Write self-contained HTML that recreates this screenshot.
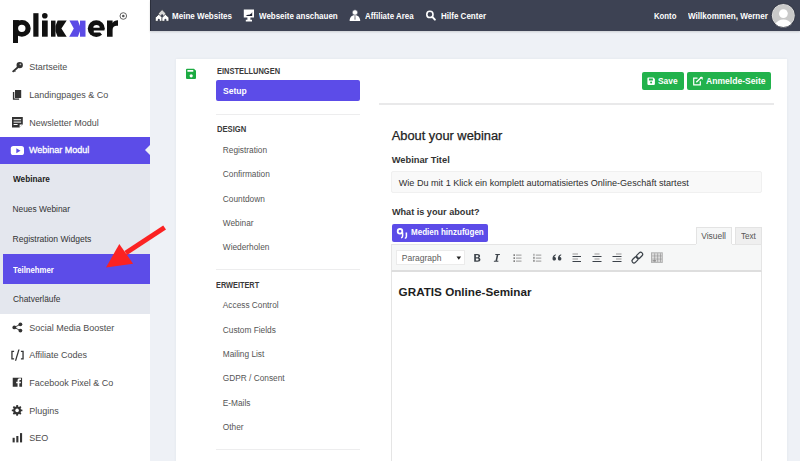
<!DOCTYPE html>
<html><head><meta charset="utf-8">
<style>
*{margin:0;padding:0;box-sizing:border-box}
html,body{width:800px;height:461px;overflow:hidden;background:#eef1f6;font-family:"Liberation Sans",sans-serif}
.a{position:absolute;white-space:nowrap;line-height:1}
.b{font-weight:bold}
#side{position:absolute;left:0;top:0;width:150px;height:461px;background:#fff}
#hdr{position:absolute;left:150px;top:0;width:650px;height:31px;background:#3d4253;box-shadow:0 1px 2px rgba(0,0,0,.15)}
.ht{color:#fff;font-size:9px;font-weight:bold;transform-origin:0 0}
.si{color:#4d4d4d;font-size:9px}
.sub{color:#333;font-size:8.4px}
.nav{color:#555;font-size:8.3px}
.cap{color:#3a3a3a;font-size:8.4px;font-weight:bold;transform-origin:0 0}
svg{position:absolute;overflow:visible}
</style></head><body>
<div id="side">
  <!-- logo -->
  <svg style="left:0;top:0" width="150" height="50" viewBox="0 0 150 50">
    <g fill="#111">
      <rect x="13" y="20.3" width="5" height="22.7"/>
      <path fill-rule="evenodd" d="M21.9 20a8.8 8.4 0 1 1 0 16.8a8.8 8.4 0 1 1 0-16.8zM21.8 24.7a3.7 3.6 0 1 0 0 7.2a3.7 3.6 0 1 0 0-7.2z"/>
      <rect x="13" y="20.2" width="6" height="5"/>
      <rect x="33.3" y="13.2" width="5.2" height="23.5"/>
      <rect x="42" y="20.5" width="5.7" height="16.2"/>
      <circle cx="44.8" cy="15.8" r="2.8"/>
      <rect x="51" y="20.6" width="4.5" height="16.1"/>
      <path d="M55.5 26L57.6 20.6H66.7L61.4 28.6L66.7 36.7H57.6L55.5 31.2z"/>
      <ellipse cx="96.3" cy="28.6" rx="8.5" ry="8.4"/>
      <path d="M107 20.6h5.6v2.4c1-1.8 2.8-2.8 5.4-2.8v5.6c-.5-.1-.9-.1-1.3-.1c-2.4 0-4.1 1.3-4.1 4.2v6.8h-5.6z"/>
    </g>
    <g fill="#fff">
      <path d="M93.3 27.7a3.2 2.7 0 0 1 6.4 0z"/>
      <path d="M93.8 30.6H106V35.5H102.5L100.2 32.5H93.8z"/>
    </g>
    <g fill="#5b4be6">
      <rect x="80" y="20.6" width="5.5" height="16.1"/>
      <path d="M69.4 20.6H77.9L80 26V31.2L77.9 36.7H69.2L73.8 28.6z"/>
    </g>
    <circle cx="123.3" cy="16" r="3.3" fill="none" stroke="#555" stroke-width=".9"/>
    <circle cx="123.3" cy="16" r="1.3" fill="#555"/>
  </svg>

  <!-- main items -->
  <svg style="left:0;top:0" width="30" height="461" viewBox="0 0 30 461">
    <g fill="#333" stroke="none">
      <!-- key -->
      <circle cx="19.7" cy="65.1" r="3.2"/>
      <path d="M17.3 66.4L12 71.2L13.2 72.5L14.3 71.6L14.9 72.1L15.7 71.4L15.3 70.8L18.7 67.8z"/>
      <!-- pages -->
      <rect x="15" y="90" width="6.2" height="8" />
      <path d="M12.9 92h1.4v6.4h4.8v1.3h-6.2z"/>
      <!-- newsletter -->
      <path d="M12 117h10.8v7.4l-3.2 3.2H12z"/>
    </g>
    <g fill="#fff">
      <rect x="13.6" y="119.2" width="7.5" height="1"/>
      <rect x="13.6" y="121.6" width="7.5" height="1"/>
      <rect x="13.6" y="124" width="4" height="1"/>
      <path d="M19.6 127.6v-3.2h3.2z"/>
    </g>
    <g fill="#333">
      <!-- share -->
      <circle cx="20.4" cy="324.3" r="1.9"/><circle cx="14.3" cy="327.4" r="1.9"/><circle cx="20.4" cy="330.6" r="1.9"/>
      <path d="M14.3 327.4L20.4 324.3M14.3 327.4L20.4 330.6" stroke="#333" stroke-width=".9"/>
      <!-- [/] -->
      <path d="M11.3 350.8h2.8v1.3h-1.5v6.2h1.5v1.3h-2.8z"/>
      <path d="M23.7 350.8h-2.8v1.3h1.5v6.2h-1.5v1.3h2.8z"/>
      <path d="M18.3 349.6h1.3l-3.4 11.2h-1.3z"/>
      <!-- fb -->
      <path transform="translate(17.4 382.3) scale(1.05) translate(-17.45 -382.3)" d="M13 378h8.9v8.6h-2.6v-3.4h1.3l.2-1.5h-1.5v-.9c0-.5.2-.8.8-.8h.8v-1.4c-.2 0-.6-.1-1.2-.1c-1.3 0-2.1.8-2.1 2.2v1h-1.3v1.5h1.3v3.4H13z"/>
      <!-- bars -->
      <rect x="12.6" y="437.8" width="2.1" height="4.6"/>
      <rect x="16.3" y="436" width="2.1" height="6.4"/>
      <rect x="20" y="433.1" width="2.1" height="9.3"/>
    </g>
    <!-- gear -->
    <g transform="translate(17.1 410.4)" fill="#333">
      <circle r="3.9"/>
      <rect x="-.95" y="-5.3" width="1.9" height="10.6" rx=".4"/>
      <rect x="-.95" y="-5.3" width="1.9" height="10.6" rx=".4" transform="rotate(45)"/>
      <rect x="-.95" y="-5.3" width="1.9" height="10.6" rx=".4" transform="rotate(90)"/>
      <rect x="-.95" y="-5.3" width="1.9" height="10.6" rx=".4" transform="rotate(135)"/>
      <circle r="1.8" fill="#fff"/>
    </g>
    <circle cx="20.4" cy="64.3" r=".9" fill="#bbb"/>
  </svg>
  <div class="a si" style="left:29.2px;top:62.9px">Startseite</div>
  <div class="a si" style="left:29.2px;top:91.2px">Landingpages &amp; Co</div>
  <div class="a si" style="left:29.2px;top:118.6px">Newsletter Modul</div>

  <div class="a" style="left:0;top:137px;width:150px;height:26.5px;background:#5c4ce8"></div>
  <div class="a" style="left:145px;top:145px;width:0;height:0;border-top:5px solid transparent;border-bottom:5px solid transparent;border-right:5px solid #eef1f6"></div>
  <svg style="left:0;top:0" width="30" height="170">
    <rect x="10.8" y="145.9" width="13.2" height="9.1" rx="2.6" fill="#fff"/>
    <path d="M16.3 148.2v5l4.2-2.5z" fill="#5c4ce8"/>
  </svg>
  <div class="a si" style="left:29px;top:146.1px;color:#fff;-webkit-text-stroke:.3px #fff">Webinar Modul</div>

  <div class="a" style="left:0;top:163.5px;width:150px;height:150.5px;background:#e4e7ee"></div>
  <div class="a" style="left:3px;top:254px;width:147px;height:29.5px;background:#5c4ce8"></div>
  <div class="a sub b" style="color:#222;left:12.5px;top:174.8px;font-size:8.8px;transform:scaleX(.936);transform-origin:0 0">Webinare</div>
  <div class="a sub" style="left:12.5px;top:204.9px">Neues Webinar</div>
  <div class="a sub" style="left:12.5px;top:234.9px;font-size:8.55px">Registration Widgets</div>
  <div class="a sub b" style="left:13px;top:265.8px;color:#fff;font-size:9px;transform:scaleX(.862);transform-origin:0 0">Teilnehmer</div>
  <div class="a sub" style="left:13px;top:294.9px">Chatverläufe</div>

  <div class="a si" style="left:29.2px;top:323.7px">Social Media Booster</div>
  <div class="a si" style="left:29.2px;top:351.4px">Affiliate Codes</div>
  <div class="a si" style="left:29.2px;top:378.9px">Facebook Pixel &amp; Co</div>
  <div class="a si" style="left:29.2px;top:406.6px">Plugins</div>
  <div class="a si" style="left:29.2px;top:433.9px">SEO</div>
</div>

<div id="hdr"></div>
<div class="a" style="left:150px;top:0;width:1.3px;height:31px;background:#2b2f3c"></div>
<svg style="left:0;top:0" width="800" height="32">
  <g fill="#fff">
    <!-- houses -->
    <path d="M162.1 9.6l3.6 3.6v3.2h-7.2v-3.2z" fill="#d8d8d8" stroke="#22262f" stroke-width=".7"/>
    <path d="M158.8 14.3l3.5 3.3v3.7h-7v-3.7z" stroke="#22262f" stroke-width=".7"/>
    <path d="M165.4 14.3l3.5 3.3v3.7h-7v-3.7z" stroke="#22262f" stroke-width=".7"/>
    <path d="M157.8 21.3v-1.5a1 1 0 0 1 2 0v1.5zM164.4 21.3v-1.5a1 1 0 0 1 2 0v1.5zM161.1 16.4v-1.2a1 1 0 0 1 2 0v1.2z" fill="#3d4253"/>
    <!-- monitor -->
    <path d="M243.8 9.5h10.2v8h-3.6v2.2h1.6v1.7h-6.2v-1.7h1.6v-2.2h-3.6z"/>
    <path d="M245.6 15.9l2.2-1.2 1.6.1 2.2-1.6.6-1.4v4.1z" fill="#1c2030"/>
    <!-- person -->
    <path d="M349.6 21c0-3.6 2.4-5.9 5.3-5.9s5.3 2.3 5.3 5.9z"/>
    <circle cx="355" cy="12.5" r="2.7" stroke="#3d4253" stroke-width=".6"/>
    <path d="M354.5 15.6h1l.3 3.6-.8.9-.8-.9z" fill="#9a9aa0"/>
  </g>
  <g fill="none" stroke="#fff">
    <circle cx="429.9" cy="14.4" r="3.1" stroke-width="1.6"/>
    <path d="M432.3 16.9l2.6 2.7" stroke-width="2" stroke-linecap="round"/>
  </g>
  <circle cx="783.3" cy="15.5" r="11.5" fill="#c9c9c9" stroke="#fff" stroke-width=".6"/>
  <circle cx="783.4" cy="13.6" r="4.4" fill="#fff"/>
  <path d="M775.3 24.6c1.5-3.3 4.5-5 8.1-5s6.6 1.7 8.1 5c-2 2-4.9 3.1-8.1 3.1s-6.1-1.1-8.1-3.1z" fill="#fff"/>
  <circle cx="783.3" cy="15.5" r="12" fill="none" stroke="#2c303c" stroke-width=".8"/>
</svg>
<div class="a ht" style="left:171.8px;top:11.5px;transform:scaleX(.8915)">Meine Websites</div>
<div class="a ht" style="left:258.8px;top:11.5px;transform:scaleX(.886)">Webseite anschauen</div>
<div class="a ht" style="left:365px;top:11.5px;transform:scaleX(.88)">Affiliate Area</div>
<div class="a ht" style="left:441px;top:11.5px;transform:scaleX(.891)">Hilfe Center</div>
<div class="a ht" style="left:654px;top:11.5px;transform:scaleX(.862)">Konto</div>
<div class="a ht" style="left:687.6px;top:11.5px;transform:scaleX(.901)">Willkommen, Werner</div>

<!-- card -->
<div class="a" style="left:176px;top:59.3px;width:611px;height:420px;background:#fff;box-shadow:0 0 3px rgba(40,50,80,.06)"></div>
<svg style="left:0;top:0" width="800" height="461">
  <!-- floppy green -->
  <path fill-rule="evenodd" fill="#1cab42" d="M186 69.7a1 1 0 0 1 1-1h7l2 2v7.3a1 1 0 0 1-1 1h-8a1 1 0 0 1-1-1zM187.4 69.9v1.8h5.9v-1.8z"/>
  <circle cx="191.2" cy="75.8" r="1.6" fill="#fff"/>
</svg>
<div class="a cap" style="left:216.8px;top:67px;transform:scaleX(.891)">EINSTELLUNGEN</div>
<div class="a" style="left:216.3px;top:80px;width:143.7px;height:20.8px;background:#5c4ce8;border-radius:2px"></div>
<div class="a b" style="left:222.5px;top:87px;font-size:9.3px;color:#fff;transform:scaleX(.92);transform-origin:0 0">Setup</div>
<div class="a" style="left:216px;top:113.6px;width:144px;height:1.3px;background:#ededee"></div>
<div class="a cap" style="left:216.6px;top:124.7px;transform:scaleX(.913)">DESIGN</div>
<div class="a nav" style="left:222.8px;top:145.9px">Registration</div>
<div class="a nav" style="left:222.8px;top:170.4px">Confirmation</div>
<div class="a nav" style="left:222.8px;top:194.9px">Countdown</div>
<div class="a nav" style="left:222.8px;top:219.1px">Webinar</div>
<div class="a nav" style="left:222.8px;top:243.3px">Wiederholen</div>
<div class="a" style="left:216px;top:269.2px;width:144px;height:1.3px;background:#ededee"></div>
<div class="a cap" style="left:216px;top:281.3px;transform:scaleX(.878)">ERWEITERT</div>
<div class="a nav" style="left:222.8px;top:301.4px">Access Control</div>
<div class="a nav" style="left:222.8px;top:325.6px">Custom Fields</div>
<div class="a nav" style="left:222.8px;top:350.2px">Mailing List</div>
<div class="a nav" style="left:222.8px;top:374.4px">GDPR / Consent</div>
<div class="a nav" style="left:222.8px;top:398.9px">E-Mails</div>
<div class="a nav" style="left:222.8px;top:422.9px">Other</div>
<div class="a" style="left:216px;top:449px;width:144px;height:1.3px;background:#ededee"></div>

<!-- right -->
<div class="a" style="left:641.5px;top:72px;width:42px;height:18px;background:#22b24c;border-radius:2px"></div>
<div class="a" style="left:687px;top:72px;width:84px;height:18px;background:#22b24c;border-radius:2px"></div>
<svg style="left:0;top:0" width="800" height="100">
  <path fill-rule="evenodd" fill="#fff" d="M647.4 78.2a.8.8 0 0 1 .8-.8h5.2l1.5 1.5v5.2a.8.8 0 0 1-.8.8h-5.9a.8.8 0 0 1-.8-.8zM648.9 78.6v1.8h4v-1.8z"/>
  <circle cx="651.1" cy="82.4" r="1" fill="#22b24c"/>
  <path d="M697.5 78.2h-3.8v6.6h6.6v-3.6" fill="none" stroke="#fff" stroke-width="1.2"/>
  <path d="M696.3 82.3l5.4-5.4" stroke="#fff" stroke-width="1.4"/>
  <path d="M699.7 76.9h3v3z" fill="#fff"/>
</svg>
<div class="a b" style="left:657.9px;top:77.3px;font-size:9px;color:#fff;transform:scaleX(.933);transform-origin:0 0">Save</div>
<div class="a b" style="left:705.5px;top:77.3px;font-size:9px;color:#fff;transform:scaleX(.954);transform-origin:0 0">Anmelde-Seite</div>
<div class="a" style="left:378.5px;top:103.4px;width:395.5px;height:1.3px;background:#e9e9ea"></div>

<div class="a" style="left:391.7px;top:129.6px;font-size:12.85px;color:#222;-webkit-text-stroke:.25px #222">About your webinar</div>
<div class="a b" style="left:391.7px;top:156.2px;font-size:9.3px;color:#333">Webinar Titel</div>
<div class="a" style="left:391.2px;top:171.2px;width:370.8px;height:21.8px;background:#f9f9f9;border:1px solid #f0f0f0;border-radius:2px"></div>
<div class="a" style="left:398.7px;top:178.5px;font-size:9.1px;color:#2e2e2e">Wie Du mit 1 Klick ein komplett automatisiertes Online-Geschäft startest</div>
<div class="a b" style="left:391.9px;top:207.8px;font-size:9.15px;color:#333">What is your about?</div>
<div class="a" style="left:391.6px;top:223.6px;width:96.2px;height:18px;background:#5c4ce8;border-radius:2px"></div>
<svg style="left:0;top:0" width="800" height="461">
  <g fill="none" stroke="#fff" stroke-width="1.8">
    <circle cx="400" cy="231.3" r="2.3"/>
  </g>
  <path d="M402.6 232.5v3.6c0 1-.6 1.6-1.6 1.6" fill="none" stroke="#fff" stroke-width="1.5"/>
  <path d="M405.6 233.2h.8v3.4c0 1-.6 1.6-1.6 1.6" fill="none" stroke="#fff" stroke-width="1.5"/>
</svg>
<div class="a b" style="left:411.4px;top:228.3px;font-size:9px;color:#fff;transform:scaleX(.893);transform-origin:0 0">Medien hinzufügen</div>

<!-- tabs -->
<div class="a" style="left:695.5px;top:227px;width:36.4px;height:18px;background:#f6f7f7;border:1px solid #e3e3e3;border-bottom:none"></div>
<div class="a" style="left:734.9px;top:227px;width:27px;height:17.5px;background:#efefef;border:1px solid #e3e3e3"></div>
<div class="a" style="left:701.2px;top:232px;font-size:8.45px;color:#555">Visuell</div>
<div class="a" style="left:740.9px;top:231.6px;font-size:8.9px;color:#555;transform:scaleX(.91);transform-origin:0 0">Text</div>

<!-- toolbar -->
<div class="a" style="left:391px;top:244px;width:371px;height:28px;background:#f6f7f7;border:1px solid #e5e5e5;border-bottom:2px solid #dedede"></div>
<div class="a" style="left:695.5px;top:243.5px;width:36.4px;height:2px;background:#f6f7f7"></div>
<div class="a" style="left:395.5px;top:249.5px;width:69.5px;height:15px;background:#fff;border:1px solid #ebebeb"></div>
<div class="a" style="left:401.8px;top:253.6px;font-size:8.5px;color:#5c5c5c">Paragraph</div>
<svg style="left:0;top:0" width="800" height="300">
  <path d="M456.5 256.5h4.6l-2.3 3.3z" fill="#222"/>
  <g fill="#3c434a">
    <!-- B -->
    <path fill-rule="evenodd" d="M474.2 254h3.3c1.7 0 2.6.8 2.6 2c0 .8-.4 1.4-1.1 1.7c.9.2 1.4.9 1.4 1.9c0 1.4-1 2.2-2.8 2.2h-3.4zM475.9 255.3v1.9h1.4c.7 0 1.1-.3 1.1-1s-.4-.9-1.1-.9zM475.9 258.4v2.1h1.6c.7 0 1.1-.4 1.1-1.1s-.4-1-1.1-1z"/>
    <!-- I -->
    <path d="M495.4 254h4.6l-.2 1h-1.5l-1.2 5.8h1.4l-.2 1h-4.5l.2-1h1.5l1.2-5.8h-1.5z"/>
    <!-- quote -->
    <path d="M552.5 258.7c0-2.6 1.3-4 3.3-4.5v1.1c-.9.4-1.4 1-1.5 1.8c1 0 1.7.7 1.7 1.7s-.7 1.8-1.7 1.8c-1.1 0-1.8-.8-1.8-1.9zM557.9 258.7c0-2.6 1.3-4 3.3-4.5v1.1c-.9.4-1.4 1-1.5 1.8c1 0 1.7.7 1.7 1.7s-.7 1.8-1.7 1.8c-1.1 0-1.8-.8-1.8-1.9z"/>
    <!-- align left -->
    <rect x="572.5" y="256" width="8.5" height="1"/><rect x="572.5" y="261" width="8.5" height="1"/>
    <!-- center -->
    <rect x="592.5" y="256" width="9" height="1"/><rect x="592.5" y="261" width="9" height="1"/>
    <!-- right -->
    <rect x="612.5" y="256" width="9" height="1"/><rect x="612.5" y="261" width="9" height="1"/>
  </g>
  <g fill="#999">
    <rect x="572.5" y="253.5" width="5.5" height="1"/><rect x="572.5" y="258.5" width="5.5" height="1"/>
    <rect x="594.5" y="253.5" width="5" height="1"/><rect x="594.5" y="258.5" width="5" height="1"/>
    <rect x="616" y="253.5" width="5.5" height="1"/><rect x="616" y="258.5" width="5.5" height="1"/>
    <!-- ul -->
    <g fill="#555"><rect x="513.5" y="254.4" width="1.4" height="1.4"/><rect x="513.5" y="257.4" width="1.4" height="1.4"/><rect x="513.5" y="260.4" width="1.4" height="1.4"/></g>
    <rect x="516" y="254.6" width="5.5" height="1"/><rect x="516" y="257.6" width="5.5" height="1"/><rect x="516" y="260.6" width="5.5" height="1"/>
    <!-- ol -->
    <g fill="#777"><rect x="533.5" y="253.8" width=".9" height="2"/><rect x="533.3" y="256.8" width="1.3" height="2"/><rect x="533.3" y="259.8" width="1.3" height="2"/></g>
    <rect x="535.8" y="254.6" width="5.5" height="1"/><rect x="535.8" y="257.6" width="5.5" height="1"/><rect x="535.8" y="260.6" width="5.5" height="1"/>
  </g>
  <!-- link -->
  <g fill="none" stroke="#3c434a" stroke-width="1.25" transform="rotate(-45 637.3 257.6)">
    <rect x="630.6" y="255.6" width="7.2" height="4" rx="2"/>
    <rect x="636.8" y="255.6" width="7.2" height="4" rx="2"/>
  </g>
  <!-- kitchen sink -->
  <rect x="651" y="252.3" width="11.8" height="10.6" fill="#b0b0b0"/>
  <g fill="#dcdcdc">
    <rect x="652" y="253.3" width="9.8" height="2.2"/>
    <rect x="652" y="256.4" width="9.8" height="2.2"/>
    <rect x="652" y="259.5" width="9.8" height="2.4"/>
  </g>
  <g fill="#8a8a8a">
    <rect x="654.5" y="253.3" width=".6" height="8.6"/><rect x="657.5" y="253.3" width=".6" height="8.6"/><rect x="660" y="253.3" width=".6" height="8.6"/>
    <rect x="652.5" y="260.2" width="3.5" height="1.2"/>
  </g>
</svg>

<!-- editor -->
<div class="a" style="left:391px;top:272px;width:371px;height:200px;background:#fff;border:1px solid #e5e5e5;border-top:none"></div>
<div class="a b" style="left:398.6px;top:286.1px;font-size:11.7px;color:#1e1e1e">GRATIS Online-Seminar</div>

<!-- red arrow -->
<svg style="left:0;top:0" width="800" height="461">
  <path d="M163.2 225.5L166 229.6L127.2 255.1L124.4 250.9z" fill="#fb2222"/>
  <path d="M106 267.6L119.3 243.9L133.1 263.7z" fill="#fb2222"/>
</svg>
</body></html>
